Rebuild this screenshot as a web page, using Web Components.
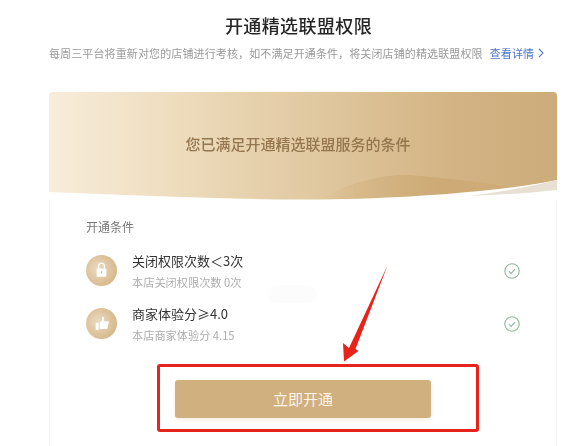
<!DOCTYPE html>
<html lang="zh"><head><meta charset="utf-8"><style>
html,body{margin:0;background:#fff;}
body{width:562px;height:446px;overflow:hidden;font-family:"Noto Sans CJK SC","Liberation Sans",sans-serif;}
</style></head><body>
<perm-page></perm-page>
<script>
const FONT='"Noto Sans CJK SC","Noto Sans",sans-serif';
class PermHeading extends HTMLElement{constructor(){super();this.attachShadow({mode:'open'}).innerHTML=`<style>
:host{display:block;padding:14px 0 0 49px;width:513px;box-sizing:border-box;font-family:${FONT};filter:blur(.3px)}
h1{margin:0;padding-left:35px;text-align:center;font-size:18px;letter-spacing:.4px;line-height:22px;font-weight:500;color:#262626}
p{margin:7px 0 0;display:flex;align-items:center;font-size:11px;line-height:20px;color:#9a9a9a;white-space:nowrap;letter-spacing:.12px}
a{margin-left:7px;color:#4a74c9;display:flex;align-items:center;gap:4px}
</style><h1><slot name="t"></slot></h1><p><slot name="s"></slot><a><slot name="l"></slot><svg width="6" height="10" viewBox="0 0 6 10"><path d="M1 1l4 4-4 4" fill="none" stroke="#5b7fc7" stroke-width="1.1"/></svg></a></p>`;}}
class PermBanner extends HTMLElement{constructor(){super();this.attachShadow({mode:'open'}).innerHTML=`<style>
:host{display:flex;height:108px;position:relative;align-items:center;justify-content:center;border-radius:4px 4px 0 0;overflow:hidden;background:linear-gradient(90deg,#f8eddb 0%,#eedcbd 25%,#dfc69d 55%,#d3b383 80%,#cdac7b 100%);font-family:${FONT}}
span{font-size:15px;line-height:20px;font-weight:500;color:#94764f;padding:0 10px 4px 0;filter:blur(.3px)}
svg{position:absolute;left:0;bottom:0;width:100%;height:28px;filter:blur(.5px)}
</style><span><slot></slot></span><svg viewBox="0 0 508 28" preserveAspectRatio="none">
<defs><linearGradient id="w" x1="0" x2="1" y1="0" y2="0"><stop offset="0" stop-color="#cdaa75" stop-opacity="0"/><stop offset=".6" stop-color="#cdaa75"/><stop offset="1" stop-color="#cdaa75" stop-opacity=".6"/></linearGradient></defs>
<path d="M270 28C300 10 335 2 360 3C400 6 440 12 478 17L440 28Z" fill="url(#w)"/>
<path d="M0 20C80 23 180 27.5 251 27.5C340 28 450 20 508 8V28H0Z" fill="#fff"/>
<path d="M508 8C480 15 450 20 420 24C450 23 480 21 508 18Z" fill="#e8e0d2"/>
</svg>`;}}
class PermRow extends HTMLElement{constructor(){super();const i=this.getAttribute('icon');
const g=i==='lock'?'<rect x="11" y="14" width="10" height="8.5" rx="1" fill="#fff"/><path d="M13 14V11.5a3 3 0 0 1 6 0V14" fill="none" stroke="#fff" stroke-width="1.3"/><rect x="15.5" y="16.5" width="1" height="2.6" fill="#d3b184"/>':'<rect x="10" y="15.5" width="3" height="7" fill="#fff"/><path d="M14 15.5l2.6-3V9c1.5-.4 2.4.9 2 2.7l-.3 2H22.5c.7 0 1.1.6.9 1.2l-1.3 6.1c-.2.5-.5.8-1 .8H14Z" fill="#fff"/>';
this.attachShadow({mode:'open'}).innerHTML=`<style>
:host{display:flex;align-items:center;font-family:${FONT}}
.ic{width:31px;height:31px;border-radius:50%;background:radial-gradient(circle at 40% 45%,#ecdcc3 0%,#dcc199 55%,#cfab78 100%);flex:none;margin-right:15px;filter:blur(.4px)}
.tx{flex:1;display:flex;flex-direction:column;filter:blur(.25px)}
b{font-weight:400;font-size:13px;line-height:18px;color:#333}
small{font-size:11.2px;line-height:14px;margin-top:5px;color:#adadad}
svg.ck{width:16px;height:16px;flex:none;filter:blur(.2px)}
</style><svg class="ic" viewBox="0 0 32 32">${g}</svg><div class="tx"><b><slot name="a"></slot></b><small><slot name="b"></slot></small></div>
<svg class="ck" viewBox="0 0 16 16"><circle cx="8" cy="8" r="7.2" fill="none" stroke="#8fb898" stroke-width="1.1"/><path d="M4.8 8.2l2.3 2.2 4-4.2" fill="none" stroke="#8fb898" stroke-width="1.1"/></svg>`;}}
class PermCta extends HTMLElement{constructor(){super();this.attachShadow({mode:'open'}).innerHTML=`<style>
:host{display:block;width:322px;height:68px;box-sizing:border-box;border:3px solid #e7231b;border-radius:3px;padding:13px 45px 11px 15px;font-family:${FONT}}
button{display:block;width:100%;height:100%;border:0;padding:0;border-radius:3px;background:#d0b07e;color:#fbf4e8;font:400 15px/38px ${FONT};box-shadow:0 2px 4px rgba(208,176,126,.2)}
</style><button><slot></slot></button>`;}}
class PermPage extends HTMLElement{constructor(){super();this.attachShadow({mode:'open'}).innerHTML=`<style>
:host{display:block;position:relative;width:562px;height:446px;overflow:hidden;font-family:${FONT}}
.card{margin:29px 0 0 49px;width:508px;height:400px;box-sizing:border-box;border:1px solid #f3f3f3;border-radius:4px 4px 0 0;display:flex;flex-direction:column}
perm-banner{margin:-1px -1px 0 -1px}
.body{display:flex;flex-direction:column;padding:18px 36px 0 36px}
h2{margin:0 0 16px;font-weight:400;font-size:12px;line-height:18px;color:#777;filter:blur(.25px)}
perm-row+perm-row{margin-top:16px}
perm-cta{margin:22px 0 0 71px}
svg.arrow{position:absolute;left:340px;top:262px;width:50px;height:102px}
.ghost{position:absolute;left:268px;top:285px;width:49px;height:18px;border-radius:9px;background:#fcfcfc}
</style>
<perm-heading><span slot="t">开通精选联盟权限</span><span slot="s">每周三平台将重新对您的店铺进行考核，如不满足开通条件，将关闭店铺的精选联盟权限</span><span slot="l">查看详情</span></perm-heading>
<div class="card"><perm-banner>您已满足开通精选联盟服务的条件</perm-banner>
<div class="body"><h2>开通条件</h2>
<perm-row icon="lock"><span slot="a">关闭权限次数＜3次</span><span slot="b">本店关闭权限次数 0次</span></perm-row>
<perm-row icon="up"><span slot="a">商家体验分≥4.0</span><span slot="b">本店商家体验分 4.15</span></perm-row>
<perm-cta>立即开通</perm-cta></div></div>
<div class="ghost"></div>
<svg class="arrow" viewBox="0 0 50 102"><path d="M47.5 3.5L15.5 87L18.5 89L4 99.5L3 81L9 86Z" fill="#e7231b"/></svg>`;}}
customElements.define('perm-heading',PermHeading);customElements.define('perm-banner',PermBanner);customElements.define('perm-row',PermRow);customElements.define('perm-cta',PermCta);customElements.define('perm-page',PermPage);
</script></body></html>
